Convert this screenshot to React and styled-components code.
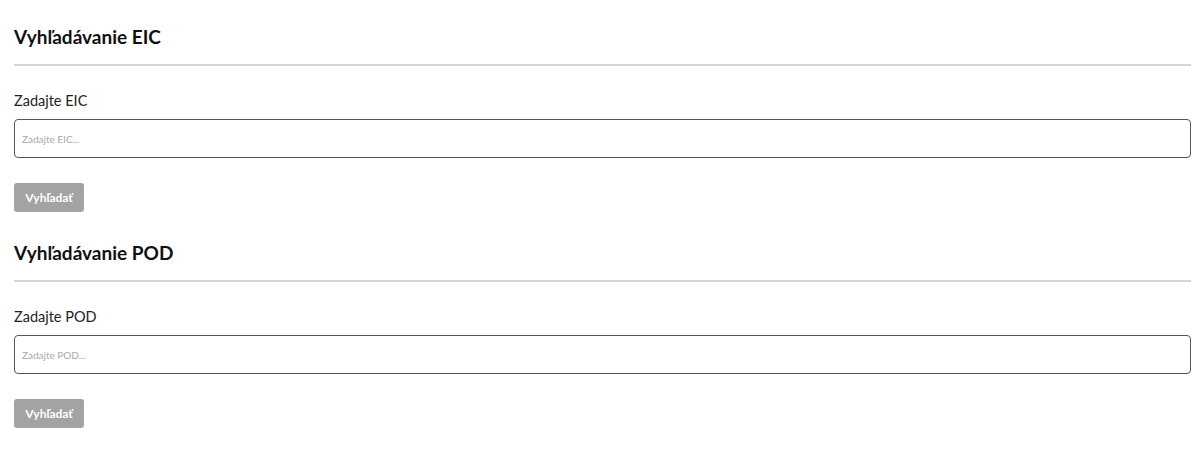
import React from "react";
import styled, { createGlobalStyle } from "styled-components";

const GlobalStyle = createGlobalStyle`
  body {
    margin: 0;
    background: #fff;
    font-family: Lato, "Open Sans", sans-serif;
    color: #222;
  }
`;

const Page = styled.div`
  padding: 0 9px 0 14px;
  display: flex;
  flex-direction: column;
`;

const Section = styled.section`
  display: flex;
  flex-direction: column;
  padding-top: ${({ first }) => (first ? "26px" : "30px")};
`;

const Title = styled.h2`
  margin: 0;
  font-size: 19px;
  line-height: 22px;
  font-weight: 700;
  color: #111;
`;

const Divider = styled.hr`
  margin: 16px 0 0;
  border: 0;
  border-top: 2px solid #d6d6d6;
`;

const Label = styled.label`
  margin-top: 26px;
  font-size: 14.5px;
  line-height: 18px;
  color: #222;
`;

const Input = styled.input`
  margin-top: 9px;
  height: 39px;
  box-sizing: border-box;
  border: 1px solid #555;
  border-radius: 4px;
  padding: 0 7px;
  font-family: inherit;
  font-size: 10px;
  color: #333;
  outline: none;
  &::placeholder {
    color: #aaa;
  }
`;

const Button = styled.button`
  margin-top: 25px;
  align-self: flex-start;
  width: 70px;
  height: 29px;
  border: 0;
  border-radius: 3px;
  background: #a3a3a3;
  color: #fff;
  font-family: inherit;
  font-weight: 700;
  font-size: 12px;
  cursor: not-allowed;
`;

function SearchBlock({ title, label, placeholder, first }) {
  return (
    <Section first={first}>
      <Title>{title}</Title>
      <Divider />
      <Label>{label}</Label>
      <Input placeholder={placeholder} />
      <Button disabled>Vyhľadať</Button>
    </Section>
  );
}

export default function App() {
  return (
    <>
      <GlobalStyle />
      <Page>
        <SearchBlock
          first
          title="Vyhľadávanie EIC"
          label="Zadajte EIC"
          placeholder="Zadajte EIC..."
        />
        <SearchBlock
          title="Vyhľadávanie POD"
          label="Zadajte POD"
          placeholder="Zadajte POD..."
        />
      </Page>
    </>
  );
}
